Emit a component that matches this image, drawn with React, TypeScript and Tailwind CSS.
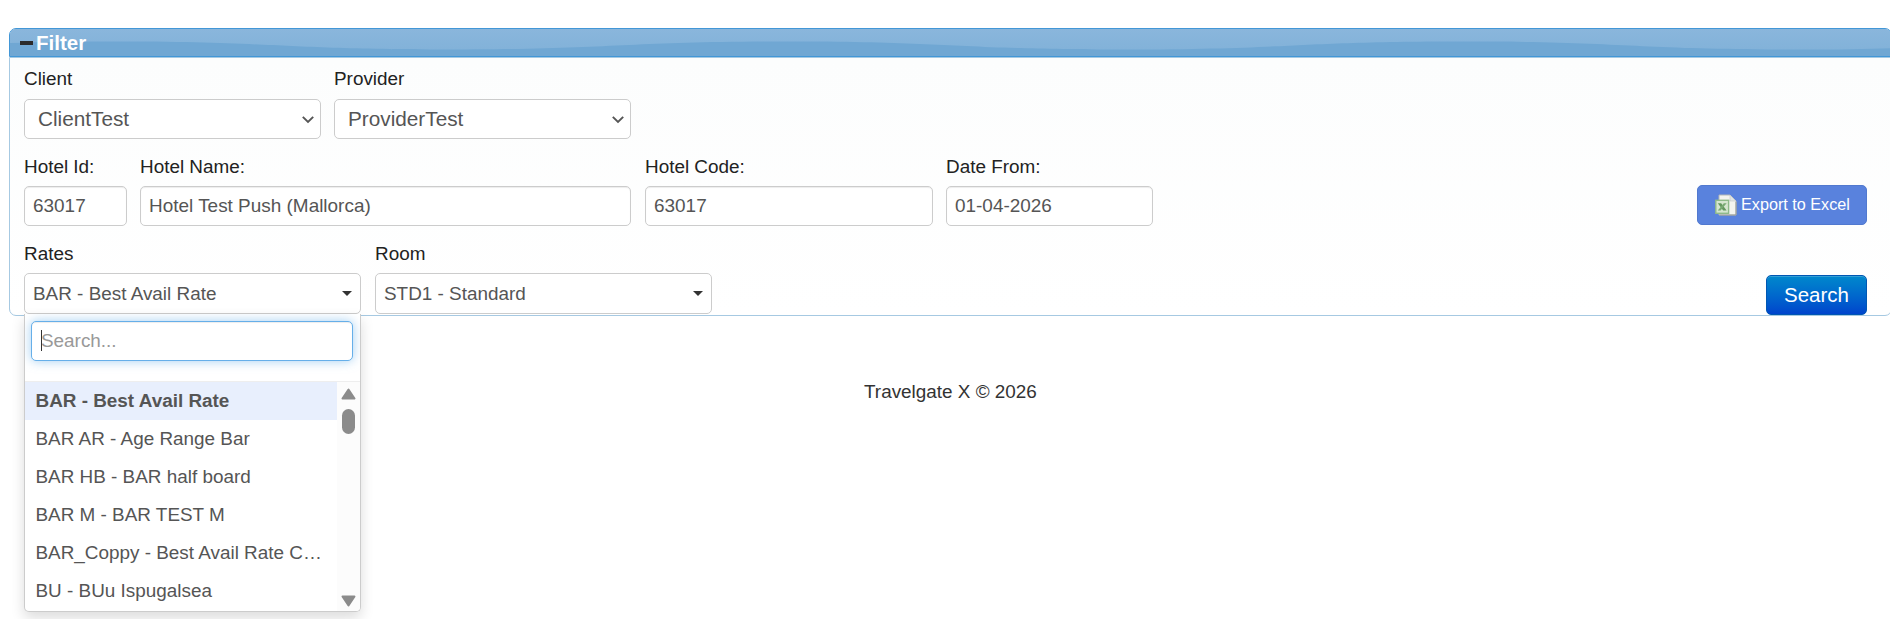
import { useState } from "react";
import type { ReactNode } from "react";

const rates = [
  "BAR - Best Avail Rate",
  "BAR AR - Age Range Bar",
  "BAR HB - BAR half board",
  "BAR M - BAR TEST M",
  "BAR_Coppy - Best Avail Rate Copy",
  "BU - BUu Ispugalsea",
];

const Field = ({
  label,
  className,
  labelClassName = "mb-1.5",
  children,
}: {
  label: string;
  className: string;
  labelClassName?: string;
  children: ReactNode;
}) => (
  <div className={`shrink-0 ${className}`}>
    <label
      className={`block h-[27px] text-[18.9px] leading-[27px] whitespace-nowrap text-[#222] ${labelClassName}`}
    >
      {label}
    </label>
    {children}
  </div>
);

const TextField = ({
  label,
  value,
  className,
}: {
  label: string;
  value: string;
  className: string;
}) => (
  <Field label={label} className={className}>
    <input
      type="text"
      defaultValue={value}
      className="block h-10 w-full rounded-[5px] border border-[#ccc] bg-white px-2 text-[18.95px] text-[#555] shadow-[inset_0_1px_1px_rgba(0,0,0,0.075)] outline-none"
    />
  </Field>
);

const SelectField = ({ label, value }: { label: string; value: string }) => (
  <Field label={label} className="w-[297px]" labelClassName="mb-[7px]">
    <div className="flex h-10 items-center justify-between rounded-[5px] border border-[#ccc] bg-white pr-[5px] pl-[13px]">
      <span className="text-[20.75px] leading-[38px] text-[#555]">{value}</span>
      <svg width="14" height="10" viewBox="0 0 14 10" fill="none">
        <path d="M1.8 2.8 7 8 12.2 2.8" stroke="#555" strokeWidth="1.9" />
      </svg>
    </div>
  </Field>
);

const PickerButton = ({
  value,
  onClick,
}: {
  value: string;
  onClick?: () => void;
}) => (
  <button
    type="button"
    onClick={onClick}
    className="flex h-[41px] w-full items-center justify-between rounded-[5px] border border-[#ccc] bg-white pr-2 pl-2 text-[18.9px] text-[#555]"
  >
    <span className="pt-px">{value}</span>
    <svg width="10" height="5" viewBox="0 0 10 5">
      <path d="M0 0h10L5 5z" fill="#333" />
    </svg>
  </button>
);

const HeaderWave = () => (
  <svg
    className="absolute inset-0"
    width="1884"
    height="28"
    viewBox="0 0 1884 28"
    preserveAspectRatio="none"
  >
    <defs>
      <linearGradient id="gloss" x1="0" y1="0" x2="0" y2="1">
        <stop offset="0" stopColor="#8ab6dc" />
        <stop offset="1" stopColor="#82b2d9" />
      </linearGradient>
    </defs>
    <rect width="1884" height="28" fill="#70a7d3" />
    <path
      d="M0 0V14C30 13 70 12.5 101 12.5C270 12.5 270 20.5 439 20.5C608 20.5 608 12.5 776 12.5C945 12.5 945 20.5 1114 20.5C1283 20.5 1283 12.5 1451 12.5C1620 12.5 1620 20.5 1789 20.5C1830 20.5 1860 20 1884 19V0z"
      fill="url(#gloss)"
    />
  </svg>
);

const ExcelIcon = () => (
  <svg width="22" height="22" viewBox="0 0 22 22">
    <path d="M4 1h11l6 6v14H4z" fill="#f3f4ef" stroke="#b3b7b5" />
    <path d="M15 1v6h6z" fill="#e2e5e4" stroke="#c3c7c8" strokeWidth=".6" />
    <path d="M4.5 21h16.5V8" fill="none" stroke="#9a9e98" strokeWidth="1" />
    <rect x=".8" y="6.3" width="12.8" height="13" fill="#d6e6d0" stroke="#8fba89" strokeWidth="1.4" />
    <path d="M2.8 9.2h3.4l5.4 7.4H8.2z" fill="#64975f" />
    <path d="M11.6 9.2H8.8l-6 7.4h2.8z" fill="#78a973" />
  </svg>
);

const RatesDropdown = () => (
  <div className="absolute top-full left-0 z-10 h-[298px] w-[337px] overflow-hidden rounded-b-[5px] border border-t-0 border-[#ccc] bg-white shadow-[0_6px_14px_rgba(0,0,0,0.14)]">
    <div className="h-[67px] pt-[7px] pr-[7px] pl-1.5">
      <input
        type="text"
        placeholder="Search..."
        className="block h-10 w-full rounded-[5px] border border-[#66afe9] bg-white px-[9px] text-[18.9px] text-[#555] shadow-[inset_0_1px_1px_rgba(0,0,0,0.075),0_0_11px_rgba(102,175,233,0.6)] outline-none placeholder:text-[#999]"
      />
      <span className="absolute top-4 left-4 h-[21px] w-px bg-[#333]" />
    </div>
    <div className="flex h-[230px] border-t border-[#eee]">
      <ul className="w-[312px] text-[18.9px] leading-[38px] text-[#555]">
        {rates.map((rate, i) => (
          <li
            key={rate}
            className={`h-[38px] truncate pr-[11px] pl-[10.5px] ${i === 0 ? "bg-[#e8effd] font-bold" : ""}`}
          >
            {rate}
          </li>
        ))}
      </ul>
      <div className="flex flex-1 flex-col items-center bg-[#fcfcfc] pt-1.5 pb-1">
        <svg width="15" height="12" viewBox="0 0 15 12">
          <path d="M7.5 1.5 13.5 10.5H1.5z" fill="#8b8b8b" stroke="#8b8b8b" strokeWidth="2" strokeLinejoin="round" />
        </svg>
        <div className="mt-[9px] h-[25px] w-[13px] rounded-full bg-[#8b8b8b]" />
        <svg className="mt-auto" width="15" height="12" viewBox="0 0 15 12">
          <path d="M7.5 10.5 13.5 1.5H1.5z" fill="#8b8b8b" stroke="#8b8b8b" strokeWidth="2" strokeLinejoin="round" />
        </svg>
      </div>
    </div>
  </div>
);

export default function App() {
  const [open, setOpen] = useState(true);

  return (
    <div className="h-[619px] overflow-hidden bg-white pt-7 pl-[9px] font-['Liberation_Sans',Arial,sans-serif]">
      <div className="w-[1883px]">
        <div className="relative flex h-[29px] items-center overflow-hidden rounded-t-[7px] border border-[#4297d7]">
          <HeaderWave />
          <span className="relative ml-[9.5px] h-1 w-[13px] bg-[#2b2b2b]" />
          <h3 className="relative ml-[3.5px] text-[20.5px] leading-[27px] font-bold text-white">
            Filter
          </h3>
        </div>

        <div className="h-[259px] rounded-b-[7px] border border-[#a6c9e2] bg-linear-to-b from-[#fcfdfd] to-white px-3.5 pt-[7px]">
          <div className="flex gap-[13px]">
            <SelectField label="Client" value="ClientTest" />
            <SelectField label="Provider" value="ProviderTest" />
          </div>

          <div className="mt-3.5 flex items-end">
            <TextField label="Hotel Id:" value="63017" className="w-[103px]" />
            <TextField
              label="Hotel Name:"
              value="Hotel Test Push (Mallorca)"
              className="ml-[13px] w-[491px]"
            />
            <TextField
              label="Hotel Code:"
              value="63017"
              className="ml-3.5 w-72"
            />
            <TextField
              label="Date From:"
              value="01-04-2026"
              className="ml-[13px] w-[207px]"
            />
            <button
              type="button"
              className="mr-2.5 mb-px ml-auto flex h-10 w-[170px] items-center gap-1 rounded-[5px] border border-[#5179cf] bg-[#5982dd] pl-[17px] text-[16.2px] whitespace-nowrap text-white"
            >
              <ExcelIcon />
              <span className="pb-px">Export to Excel</span>
            </button>
          </div>

          <div className="mt-3.5 flex items-end">
            <Field label="Rates" className="w-[337px]">
              <div className="relative">
                <PickerButton
                  value="BAR - Best Avail Rate"
                  onClick={() => setOpen(!open)}
                />
                {open && <RatesDropdown />}
              </div>
            </Field>
            <Field label="Room" className="ml-3.5 w-[337px]">
              <PickerButton value="STD1 - Standard" />
            </Field>
            <button
              type="button"
              className="mr-2.5 -mb-px ml-auto h-10 w-[101px] rounded-[5px] border border-[#0057b3] bg-linear-to-b from-[#0088cc] to-[#0044cc] text-[20.5px] text-white shadow-[inset_0_1px_0_rgba(255,255,255,0.2)]"
            >
              Search
            </button>
          </div>
        </div>
      </div>

      <footer className="mt-[62px] ml-[855px] text-[18.9px] leading-[27px] text-[#333]">
        Travelgate X © 2026
      </footer>
    </div>
  );
}
